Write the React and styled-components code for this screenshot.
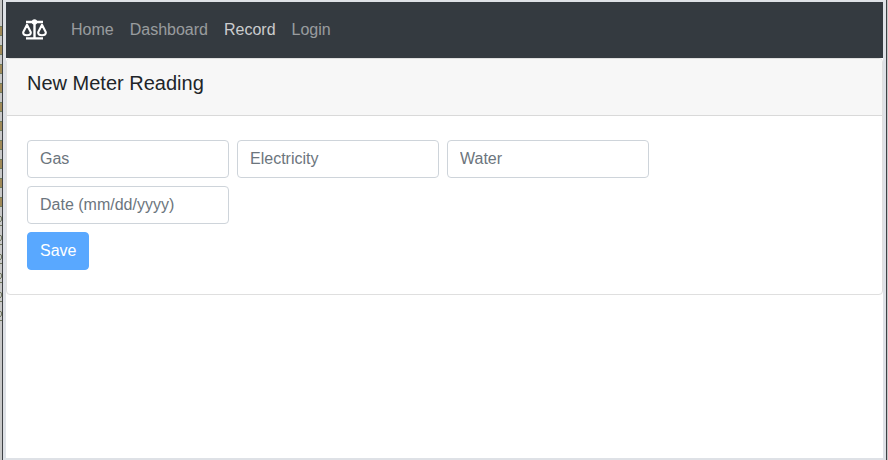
import React from "react";
import styled, { createGlobalStyle } from "styled-components";

const GlobalStyle = createGlobalStyle`
  *, *::before, *::after { box-sizing: border-box; }
  body {
    margin: 0;
    overflow: hidden;
    font-family: "Liberation Sans", Arial, sans-serif;
    font-size: 16px;
    line-height: 24px;
    color: #212529;
  }
`;

const Desktop = styled.div`
  display: flex;
  width: 888px;
  height: 460px;
  background: #c8c8c8;
`;

const BackgroundList = styled.div`
  flex: none;
  display: flex;
  flex-direction: column;
  width: 2px;
  padding-top: 26px;
  overflow: hidden;
`;

const FolderEdge = styled.div`
  flex: none;
  height: 10px;
  margin-bottom: 9px;
  background: #a08a58;
  border: solid #6f7d5c;
  border-width: 1px 0;
`;

const FileEdge = styled.svg`
  flex: none;
  display: block;
  width: 2px;
  height: 10px;
  margin-bottom: 9px;
`;

const WindowFrame = styled.div`
  flex: none;
  width: 885px;
  height: 460px;
  padding: 2px 3px;
  background: #dee1e6;
  border: solid #3e4145;
  border-width: 0 1px;
`;

const Page = styled.main`
  width: 877px;
  height: 456px;
  background: #fff;
`;

const Navbar = styled.nav`
  display: flex;
  align-items: center;
  height: 56px;
  padding: 0 16px;
  background: #343a40;
`;

const Brand = styled.a`
  display: flex;
  margin-right: 16px;
  color: #fff;
`;

const ScaleIcon = styled.svg`
  display: block;
  width: 25px;
  height: 22px;
`;

const NavLink = styled.a`
  padding: 8px;
  white-space: nowrap;
  color: ${({ $active }) => ($active ? "rgba(255,255,255,.75)" : "rgba(255,255,255,.5)")};
`;

const Card = styled.section`
  height: 237px;
  border: 1px solid #dfdfdf;
  border-radius: 4px;
  overflow: hidden;
`;

const CardHeader = styled.header`
  height: 57px;
  padding: 12px 20px;
  background: #f7f7f7;
  border-bottom: 1px solid #d9d9d9;
`;

const CardTitle = styled.h5`
  margin: 0;
  font-size: 20px;
  font-weight: 400;
  line-height: 24px;
`;

const Form = styled.form`
  display: flex;
  flex-direction: column;
  align-items: flex-start;
  gap: 8px;
  padding: 24px 20px;
`;

const FieldRow = styled.div`
  display: flex;
  gap: 8px;
`;

const Field = styled.input`
  width: 202px;
  height: 38px;
  padding: 6px 12px;
  border: 1px solid #ced4da;
  border-radius: 4px;
  font: inherit;
  background: #fff;

  &::placeholder {
    color: #6c757d;
    opacity: 1;
  }
`;

const SaveButton = styled.button`
  width: 62px;
  height: 38px;
  padding: 6px 12px;
  border: 1px solid #59a8ff;
  border-radius: 4px;
  background: #59a8ff;
  color: #fff;
  font: inherit;
`;

const links = ["Home", "Dashboard", "Record", "Login"];
const folders = Array.from({ length: 10 }, (_, i) => i);
const files = Array.from({ length: 6 }, (_, i) => i);

function BalanceScale() {
  return (
    <ScaleIcon viewBox="0 0 25 22" fill="none" stroke="currentColor">
      <circle cx="12.5" cy="3" r="2.7" fill="currentColor" stroke="none" />
      <path d="M4 3h17M4 19.4h17" strokeWidth="2.3" />
      <path d="M12.5 3v16" strokeWidth="2.4" />
      <path d="M5 5.8 1.3 13Q.6 16.2 5 16.2T8.7 13ZM20 5.8l-3.7 7.2q-.7 3.2 3.7 3.2t3.7-3.2Z" strokeWidth="2.1" strokeLinejoin="round" />
    </ScaleIcon>
  );
}

export default function App() {
  return (
    <Desktop>
      <GlobalStyle />
      <BackgroundList>
        {folders.map((i) => <FolderEdge key={i} />)}
        {files.map((i) => (
          <FileEdge key={i} viewBox="0 0 2 10" fill="none" stroke="#6d745a">
            <path d="M0 .5h1l.6 1.5v2L0 6M0 9.5h2" />
          </FileEdge>
        ))}
      </BackgroundList>
      <WindowFrame>
        <Page>
          <Navbar>
            <Brand aria-label="Meter readings"><BalanceScale /></Brand>
            {links.map((label) => (
              <NavLink key={label} $active={label === "Record"}>{label}</NavLink>
            ))}
          </Navbar>
          <Card>
            <CardHeader>
              <CardTitle>New Meter Reading</CardTitle>
            </CardHeader>
            <Form>
              <FieldRow>
                <Field placeholder="Gas" />
                <Field placeholder="Electricity" />
                <Field placeholder="Water" />
              </FieldRow>
              <Field placeholder="Date (mm/dd/yyyy)" />
              <SaveButton type="button">Save</SaveButton>
            </Form>
          </Card>
        </Page>
      </WindowFrame>
    </Desktop>
  );
}
